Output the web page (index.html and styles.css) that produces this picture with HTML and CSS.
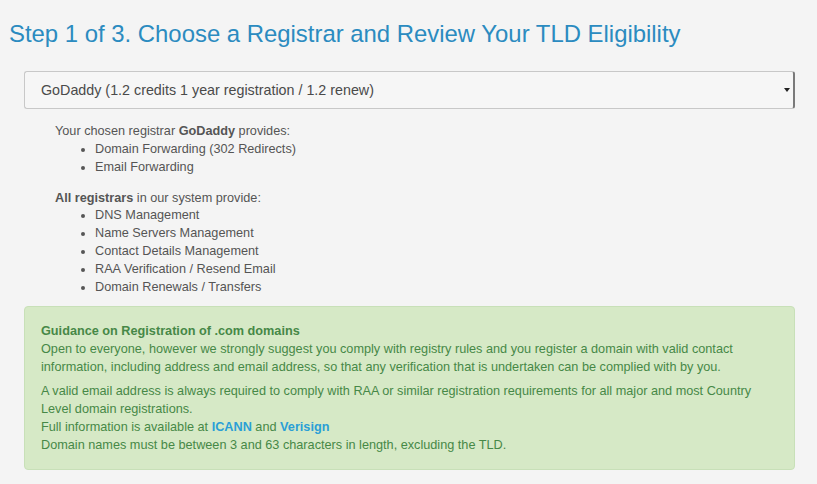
FILE: index.html
```html
<!DOCTYPE html>
<html lang="en">
<head>
  <meta charset="UTF-8">
  <title>Choose a Registrar</title>
  <link rel="stylesheet" href="styles.css">
</head>
<body>
  <h1 class="step-title">Step 1 of 3. Choose a Registrar and Review Your TLD Eligibility</h1>
  <div class="step-body">
    <div class="registrar-select">
      <span>GoDaddy (1.2 credits 1 year registration / 1.2 renew)</span>
      <span class="caret"></span>
    </div>
    <div class="features">
      <p>Your chosen registrar <b>GoDaddy</b> provides:</p>
      <ul>
        <li>Domain Forwarding (302 Redirects)</li>
        <li>Email Forwarding</li>
      </ul>
      <p><b>All registrars</b> in our system provide:</p>
      <ul>
        <li>DNS Management</li>
        <li>Name Servers Management</li>
        <li>Contact Details Management</li>
        <li>RAA Verification / Resend Email</li>
        <li>Domain Renewals / Transfers</li>
      </ul>
    </div>
    <div class="alert-success">
      <p><b>Guidance on Registration of .com domains</b><br>
      Open to everyone, however we strongly suggest you comply with registry rules and you register a domain with valid contact information, including address and email address, so that any verification that is undertaken can be complied with by you.</p>
      <p>A valid email address is always required to comply with RAA or similar registration requirements for all major and most Country Level domain registrations.<br>
      Full information is available at <a href="#">ICANN</a> and <a href="#">Verisign</a><br>
      Domain names must be between 3 and 63 characters in length, excluding the TLD.</p>
    </div>
  </div>
</body>
</html>
```

FILE: styles.css
```css
body {
  margin: 0;
  padding: 0;
  background-color: #f4f4f4;
  font-family: "Liberation Sans", Arial, sans-serif;
  font-size: 12.7px;
  line-height: 18px;
  color: #555;
}
.step-title {
  margin: 0;
  padding: 20px 9px 0;
  font-size: 23.9px;
  font-weight: normal;
  line-height: 28px;
  color: #2b8bc0;
}
.step-body {
  margin: 23px 22px 0 24px;
}
.registrar-select {
  height: 38px;
  box-sizing: border-box;
  border: 1px solid #c8c8c8;
  border-right: 2px solid #7a7a7a;
  border-radius: 3px;
  background-color: #f6f6f6;
  display: flex;
  align-items: center;
  justify-content: space-between;
  padding: 0 3px 0 16px;
  font-size: 14.3px;
  color: #4a4a4a;
}
.caret {
  width: 0;
  height: 0;
  border-left: 3px solid transparent;
  border-right: 3px solid transparent;
  border-top: 4px solid #222;
}
.features {
  padding: 13px 0 0 31px;
}
.features p {
  margin: 0;
}
.features ul {
  margin: 0 0 13px;
  padding-left: 40px;
}
.features ul:last-child {
  margin: -1px 0 10px;
}
.alert-success {
  padding: 15px 16px 15px;
  background-color: #d6e9c6;
  border: 1px solid #c8e0b8;
  border-radius: 4px;
  color: #468847;
}
.alert-success p {
  margin: 0 0 6px;
}
.alert-success p:last-child {
  margin-bottom: 0;
}
.alert-success a {
  color: #2a9fd6;
  font-weight: bold;
  text-decoration: none;
}
```
